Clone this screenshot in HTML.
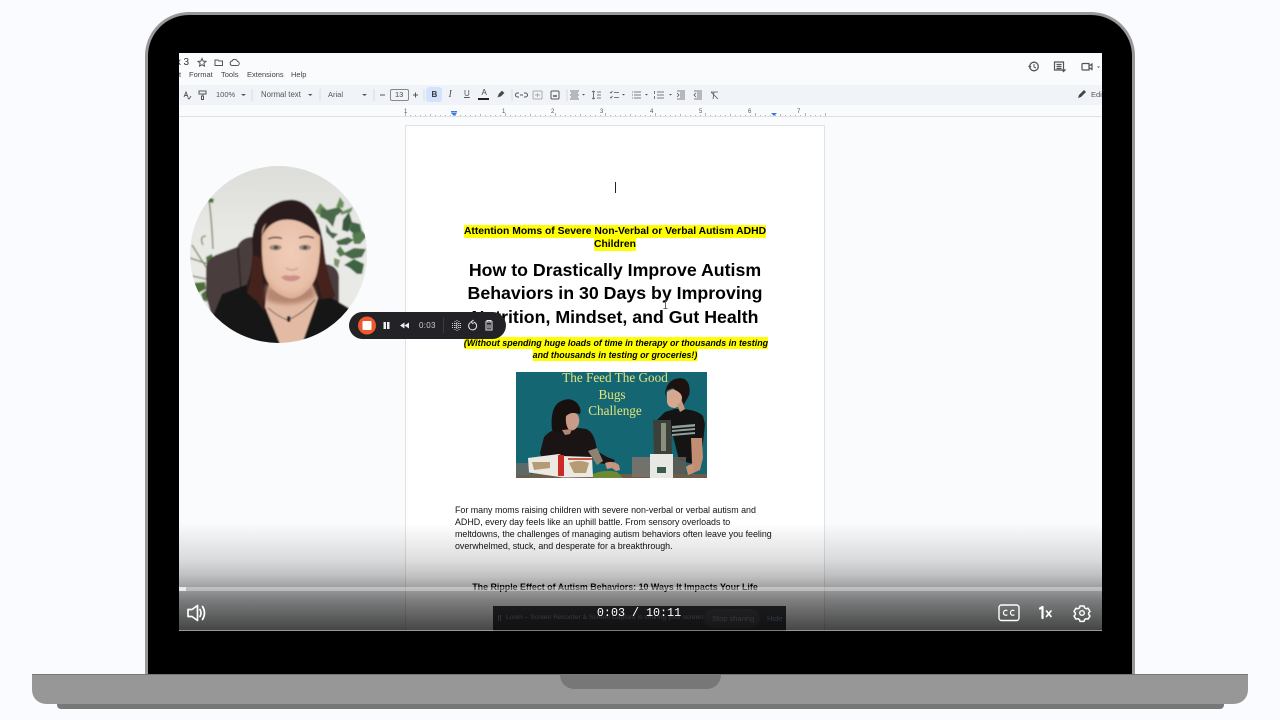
<!DOCTYPE html>
<html lang="en"><head><meta charset="utf-8"><title>Video</title>
<style>
html,body{margin:0;padding:0;width:1280px;height:720px;overflow:hidden;background:#f9fbff;font-family:"Liberation Sans",sans-serif}
.a{position:absolute}
.t{position:absolute;white-space:nowrap;line-height:1}
.c{transform:translateX(-50%)}
#bezel{left:145px;top:12px;width:984px;height:680px;border:3px solid #999;border-bottom:0;border-radius:44px 44px 0 0;background:#000}
#screen{left:179px;top:53px;width:923px;height:578px;background:#f9fbfd;overflow:hidden}
#screen .in{position:absolute;left:-179px;top:-53px;width:1280px;height:720px;filter:blur(.3px)}
.m{font-size:7.5px;color:#444}
.y{background:#ff0;color:#000;font-weight:bold;line-height:13px}
</style></head><body>

<div class="a" id="bezel"></div>
<div class="a" style="left:32px;top:674px;width:1216px;height:30px;background:#979797;border-radius:0 0 14px 14px;border-top:1px solid #777;box-sizing:border-box"></div>
<div class="a" style="left:57px;top:704px;width:1167px;height:5px;background:#777;border-radius:0 0 4px 4px"></div>
<div class="a" style="left:560px;top:674px;width:161px;height:15px;background:#777;border-radius:0 0 14px 14px"></div>

<div class="a" id="screen"><div class="in">
  <!-- toolbar + ruler -->
  <div class="a" style="left:179px;top:85px;width:923px;height:20px;background:#f0f4f8"></div>
  <div class="a" style="left:179px;top:116px;width:923px;height:1px;background:#dfe1e4"></div>
  <div class="t" style="left:183.500px;top:58px;font-size:10px;color:#333">3</div>
  <div class="t" style="left:176px;top:58px;font-size:10px;color:#333">x</div>
  <div class="t m" style="left:179px;top:70.500px;color:#444;width:2px;overflow:hidden">t</div>
  <div class="t m" style="left:189px;top:70.500px">Format</div>
  <div class="t m" style="left:221px;top:70.500px">Tools</div>
  <div class="t m" style="left:247px;top:70.500px">Extensions</div>
  <div class="t m" style="left:291px;top:70.500px">Help</div>
  <div class="t m" style="left:216px;top:91px;color:#555">100%</div>
  <div class="t" style="left:261px;top:90.500px;font-size:7.800px;color:#555">Normal text</div>
  <div class="t m" style="left:328px;top:90.500px;color:#555">Arial</div>
  <div class="a" style="left:390px;top:89px;width:17px;height:10px;border:1px solid #888;border-radius:2px"></div>
  <div class="t m" style="left:395px;top:91px;color:#444">13</div>
  <div class="a" style="left:426px;top:87px;width:16px;height:15px;background:#d5e3fa;border-radius:3px"></div>
  <div class="t" style="left:431.500px;top:91px;font-size:8px;font-weight:bold;color:#334">B</div>
  <div class="t" style="left:448.500px;top:90px;font-size:10px;font-style:italic;font-family:'Liberation Serif',serif;color:#555">I</div>
  <div class="t" style="left:464px;top:90px;font-size:8px;color:#555;text-decoration:underline">U</div>
  <div class="t" style="left:481.500px;top:89px;font-size:8px;color:#444">A</div>
  <div class="t m" style="left:1091px;top:91px;color:#555;width:11px;overflow:hidden">Edit</div>

  <svg class="a" style="left:0;top:0" width="1280" height="720" viewBox="0 0 1280 720" fill="none" stroke="#555" stroke-width="1">
    <!-- title icons -->
    <path d="M202 58.500l1.200 2.600 2.800.3-2.100 1.900.6 2.800-2.500-1.400-2.500 1.400.6-2.800-2.100-1.900 2.800-.3z"/>
    <path d="M215 60h3l1 1h3.500v4.500H215z"/>
    <path d="M232 65.500h5a2 2 0 0 0 .5-4 3 3 0 0 0-5.500-.5 2.300 2.300 0 0 0 0 4.500z"/>
    <!-- right icons -->
    <circle cx="1034" cy="66.500" r="4.300" stroke-width="1.300"/><path d="M1034 64v3l2 1M1028.500 66l1.500 1.500 1-1.500" stroke-width="1"/>
    <path d="M1054.500 62h9v8h1.500l-1.500 1.500-1-1.500h-8z M1056.500 64.500h5M1056.500 66.500h5M1056.500 68.500h5" stroke-width="1.200"/>
    <path d="M1083 63.500h6v6.500h-6a1 1 0 0 1-1-1v-4.500a1 1 0 0 1 1-1zM1089 66l3-2v5.500l-3-2" stroke-width="1.200"/>
    <path d="M1097 66.500h3l-1.500 1.500z" fill="#555" stroke="none"/>
    <!-- toolbar icons -->
    <path d="M184 97l2-5 2 5M185 95.500h2M187.500 97.500l1.500 1.500 2-3" stroke-width=".9"/>
    <path d="M199 91h7v3h-7zM203 94v2h-1.500v3.500h2V96" stroke-width="1"/>
    <path d="M241 94h5l-2.500 2z M308 94h4.500l-2.250 2z M362 94h5l-2.500 2z" fill="#555" stroke="none"/>
    <path d="M252 89v12M320 89v12M374 89v12M424 89v12M512 89v12M567 89v12" stroke="#d7dbe0"/>
    <path d="M380 95h5M413 95h5M415.500 92.500v5" stroke-width="1"/>
    <rect x="478" y="98" width="11" height="2" fill="#222" stroke="none"/>
    <path d="M498 97l1-3 3-3 2 2-3 3z" fill="#444" stroke-width=".6"/>
    <path d="M519 93h-1.500a2 2 0 0 0 0 4H519M524 93h1.500a2 2 0 0 1 0 4H524M520 95h3"/>
    <rect x="533" y="91" width="9" height="8" rx="1" stroke="#aaa"/><path d="M535 95h5M537.500 93v4" stroke="#aaa"/>
    <rect x="551" y="91" width="8" height="8" rx="1"/><path d="M553 96h4" stroke-width="1.500"/>
    <path d="M570 91h9M571 93h7M570 95h9M571 97h7M570 99h9" stroke-width=".8"/>
    <path d="M582 94h3l-1.500 1.500zM622 94h3l-1.500 1.500zM645 94h3l-1.500 1.500zM669 94h3l-1.500 1.500z" fill="#555" stroke="none"/>
    <path d="M592 92l1.500-1 1.500 1M592 98l1.500 1 1.500-1M593.500 92v6M597 92h4M597 95h4M597 98h4" stroke-width=".8"/>
    <path d="M610 92l1 1 1.500-2M610 97l1 1 1.500-2M614 92.500h5M614 97.500h5" stroke-width=".8"/>
    <path d="M634 92h7M634 95h7M634 98h7M632 92h1M632 95h1M632 98h1" stroke-width=".8"/>
    <path d="M657 92h7M657 95h7M657 98h7M654.500 91v3M654.500 96v3" stroke-width=".8"/>
    <path d="M677 91h8M680 93h5M680 95h5M680 97h5M677 99h8M677 93l2 2-2 2" stroke-width=".8"/>
    <path d="M694 91h8M697 93h5M697 95h5M697 97h5M694 99h8M696 93l-2 2 2 2" stroke-width=".8"/>
    <path d="M711 92h7M714 92l-1 7M711 92l7 7" stroke-width=".8"/>
    <path d="M1078 98l1-3 5-5 2 2-5 5z" fill="#444" stroke="none"/>

    <!-- ruler -->
    <path d="M405.500 113v3M410.500 115v1M415.500 115v1M420.500 115v1M425.500 115v1M430.500 114v2M435.500 115v1M440.500 115v1M445.500 115v1M450.500 115v1M455.500 113v3M460.500 115v1M465.500 115v1M470.500 115v1M475.500 115v1M480.500 114v2M485.500 115v1M490.500 115v1M495.500 115v1M500.500 115v1M505.500 113v3M510.500 115v1M515.500 115v1M520.500 115v1M525.500 115v1M530.500 114v2M535.500 115v1M540.500 115v1M545.500 115v1M550.500 115v1M555.500 113v3M560.500 115v1M565.500 115v1M570.500 115v1M575.500 115v1M580.500 114v2M585.500 115v1M590.500 115v1M595.500 115v1M600.500 115v1M605.500 113v3M610.500 115v1M615.500 115v1M620.500 115v1M625.500 115v1M630.500 114v2M635.500 115v1M640.500 115v1M645.500 115v1M650.500 115v1M655.500 113v3M660.500 115v1M665.500 115v1M670.500 115v1M675.500 115v1M680.500 114v2M685.500 115v1M690.500 115v1M695.500 115v1M700.500 115v1M705.500 113v3M710.500 115v1M715.500 115v1M720.500 115v1M725.500 115v1M730.500 114v2M735.500 115v1M740.500 115v1M745.500 115v1M750.500 115v1M755.500 113v3M760.500 115v1M765.500 115v1M770.500 115v1M775.500 115v1M780.500 114v2M785.500 115v1M790.500 115v1M795.500 115v1M800.500 115v1M805.500 113v3M810.500 115v1M815.500 115v1M820.500 115v1M825.500 113v3" stroke="#999" stroke-width=".7"/>
    <path d="M451 111h6v1.500h-6zM451 113h6l-3 3z" fill="#3b78e7" stroke="none"/>
    <path d="M771 113h6l-3 3z" fill="#3b78e7" stroke="none"/>
    <g font-family="Liberation Sans" font-size="6" fill="#555" stroke="none">
      <text x="404" y="113">1</text><text x="502" y="113">1</text><text x="551" y="113">2</text><text x="600" y="113">3</text><text x="650" y="113">4</text><text x="699" y="113">5</text><text x="748" y="113">6</text><text x="797" y="113">7</text>
    </g>
  </svg>

  <!-- document page -->
  <div class="a" style="left:405px;top:125px;width:420px;height:520px;background:#fff;border:1px solid #e0e2e5;box-sizing:border-box"></div>
  <div class="a" style="left:615px;top:182px;width:1px;height:11px;background:#222"></div>

  <div class="t c" style="left:615px;top:224.500px;font-size:10.350px"><span class="y" style="display:block">Attention Moms of Severe Non-Verbal or Verbal Autism ADHD</span></div>
  <div class="t c" style="left:615px;top:237.500px;font-size:10.350px"><span class="y" style="display:block">Children</span></div>
  <div class="t c" style="left:615px;top:261.500px;font-size:17.750px;font-weight:bold;color:#000">How to Drastically Improve Autism</div>
  <div class="t c" style="left:615px;top:285px;font-size:17.750px;font-weight:bold;color:#000">Behaviors in 30 Days by Improving</div>
  <div class="t c" style="left:615px;top:308.500px;font-size:17.750px;font-weight:bold;color:#000">Nutrition, Mindset, and Gut Health</div>
  <div class="t c" style="left:616px;top:337px;font-size:8.900px;font-style:italic"><span class="y" style="display:block;line-height:12px">(Without spending huge loads of time in therapy or thousands in testing</span></div>
  <div class="t c" style="left:615px;top:349px;font-size:8.900px;font-style:italic"><span class="y" style="display:block;line-height:12px">and thousands in testing or groceries!)</span></div>
  <svg class="a" style="left:662px;top:300px" width="7" height="10" viewBox="0 0 7 10" fill="none" stroke="#444" stroke-width=".8"><path d="M1.500 .5h4M3.500 .5v8M1.500 8.500h4"/></svg>

  <!-- challenge image -->
  <svg class="a" style="left:516px;top:372px;filter:blur(.35px)" width="191" height="106" viewBox="516 372 191 106">
    <rect x="516" y="372" width="191" height="106" fill="#146672"/>
    <rect x="516" y="474" width="191" height="4" fill="#6b5d4a"/>
    <path d="M516 463h15l-1 12h-14z" fill="#5b6a68"/>
    <g font-family="Liberation Serif" font-size="13.200" fill="#e4e47c" text-anchor="middle">
      <text x="615" y="382">The Feed The Good</text><text x="612" y="399">Bugs</text><text x="615" y="415">Challenge</text>
    </g>
    <!-- woman -->
    <path d="M540 453l4-16q5-6 15-9l12-1 15 2q9 3 11 22l10 6 8 3-3 5-14-2-8-6-2 20h-20l-26-18z" fill="#1a1414"/>
    <path d="M552 430q-2-20 6-27 10-7 18-1 6 6 4 12l-5-1-8 18-9 2z" fill="#16100f"/>
    <path d="M566 416q6-5 11-2 4 5 1 12-4 6-9 4-4-5-3-14z" fill="#c89c86"/>
    <path d="M562 430l10-1-2 5-5 1z" fill="#b58572"/>
    <path d="M605 463q8-3 14 2l1 5-4 1-4-3-5 1z" fill="#c79480"/>
    <path d="M588 451l9-3 6 13-6 4z" fill="#8f8273"/>
    <!-- book -->
    <path d="M528 458l31-4 4 2 29 1 1 20-30 .5-34-5z" fill="#ece9e2"/>
    <rect x="558" y="455" width="6" height="21" fill="#cc2a26"/>
    <path d="M532 462h18v6l-16 2zM569 463q10-4 20 0l-3 10h-12z" fill="#a9885a" opacity=".8"/>
    <path d="M568 458h24v2h-24z" fill="#c95b4a"/>
    <path d="M593 474q12-5 24-2l6 6h-30z" fill="#6f8a35"/>
    <!-- teen -->
    <path d="M657 420l8-8 10-3h8q14 1 20 7l2 8-4 38-8 2-14-4-6-24-16-6z" fill="#141414"/>
    <path d="M672 426l23-2v2.500l-23 2zM672 430l23-2v2l-23 2zM672 434l23-2v2l-23 2z" fill="#8f9f9c"/>
    <path d="M665 396q0-13 10-17 11-3 14 6 2 9-2 14l-4 7-2-10-8-8-6 2z" fill="#1e1210"/>
    <path d="M667 392q6-4 8-2 7 3 7 8-1 8-7 10-7 0-8-6 0-6 0-10z" fill="#d6a890"/>
    <path d="M677 405l5-4 3 8-5 3z" fill="#c59880"/>
    <path d="M691 438h11l1 20-3 12-9 4-3-3 4-8z" fill="#c18d73"/>
    <path d="M686 467q4-4 8-2l-1 8-5 2z" fill="#c89478"/>
    <!-- juicer -->
    <path d="M653 420h18l1 34h-18z" fill="#3d4038"/>
    <path d="M661 423h5v28h-5z" fill="#8a8f7c"/>
    <path d="M650 454h23v24h-23z" fill="#e7e7e4"/>
    <rect x="657" y="467" width="9" height="6" fill="#3c5a4a"/>
    <path d="M632 457h18v20h-18z" fill="#7b726d" opacity=".9"/>
    <path d="M673 457h13v17h-13z" fill="#5e5a55" opacity=".9"/>
  </svg>

  <div class="t" style="left:455px;top:505.500px;font-size:8.900px;color:#111">For many moms raising children with severe non-verbal or verbal autism and</div>
  <div class="t" style="left:455px;top:517.500px;font-size:8.900px;color:#111">ADHD, every day feels like an uphill battle. From sensory overloads to</div>
  <div class="t" style="left:455px;top:529.500px;font-size:8.900px;color:#111">meltdowns, the challenges of managing autism behaviors often leave you feeling</div>
  <div class="t" style="left:455px;top:541.500px;font-size:8.900px;color:#111">overwhelmed, stuck, and desperate for a breakthrough.</div>
  <div class="t c" style="left:615px;top:582.500px;font-size:8.900px;font-weight:bold;color:#000">The Ripple Effect of Autism Behaviors: 10 Ways It Impacts Your Life</div>

  <!-- Loom sharing bar -->
  <div class="a" style="left:493px;top:606px;width:293px;height:30px;background:#3a3b3f"></div>
  <div class="t" style="left:506px;top:615px;font-size:6.700px;color:#9a9a9a">Loom – Screen Recorder &amp; Screen Capture is sharing your screen.</div>
  <div class="a" style="left:704px;top:609px;width:56px;height:19px;border-radius:10px;background:#4a4b4f"></div>
  <div class="t" style="left:712px;top:615px;font-size:7.500px;color:#9a9a9a">Stop sharing</div>
  <div class="t" style="left:767px;top:615px;font-size:7.500px;color:#7a9ad0">Hide</div>
  <div class="a" style="left:498px;top:615px;width:1px;height:6px;background:#888;box-shadow:2px 0 0 #888"></div>
 </div>

  <!-- dark gradient -->
  <div class="a" style="left:0;top:470px;width:923px;height:108px;background:linear-gradient(to bottom,rgba(0,0,0,0) 0%,rgba(0,0,0,.13) 34%,rgba(0,0,0,.23) 48%,rgba(0,0,0,.5) 71%,rgba(0,0,0,.73) 100%)"></div>
  <div class="a" style="left:0;top:534px;width:923px;height:4px;background:rgba(255,255,255,.35)"></div>
  <div class="a" style="left:0;top:534px;width:7px;height:4px;background:rgba(255,255,255,.7)"></div>
  <div class="a" style="left:0;top:577px;width:923px;height:1px;background:rgba(255,255,255,.45)"></div>
</div>

<!-- webcam bubble -->
<svg class="a" style="left:190px;top:166px" width="177" height="177" viewBox="190 166 177 177">
  <defs><clipPath id="ci"><circle cx="278.500" cy="254.500" r="88.500"/></clipPath>
  <linearGradient id="bg" x1="0" y1="0" x2="0" y2="1"><stop offset="0" stop-color="#dcdcd8"/><stop offset=".4" stop-color="#e8e8e5"/><stop offset="1" stop-color="#e9e9e6"/></linearGradient>
  <radialGradient id="fc" cx=".5" cy=".45" r=".6"><stop offset="0" stop-color="#f0cdb8"/><stop offset=".75" stop-color="#e8bfa8"/><stop offset="1" stop-color="#d5a48c"/></radialGradient>
  <filter id="sf" x="-5%" y="-5%" width="110%" height="110%"><feGaussianBlur stdDeviation=".7"/></filter>
  <filter id="sf2" x="-20%" y="-20%" width="140%" height="140%"><feGaussianBlur stdDeviation="2"/></filter></defs>
  <g clip-path="url(#ci)">
    <g filter="url(#sf)">
    <rect x="185" y="160" width="190" height="190" fill="url(#bg)"/>
    <!-- left plant -->
    <path d="M209 199q3 25 4 50M192 245l14 22M190 258l18 6M203 245q-4-9 3-9M192 276l14 3" stroke="#74835a" stroke-width="1.300" fill="none"/>
    <path d="M208 202l2-4 4 1-1 4zM206 257l6-3 1 7-6 5zM193 283l12-1 1 7-8 4zM201 294l5-4 1 12-4-2z" fill="#4e7038"/>
    <!-- right plant -->
    <g fill="#48694a">
      <path d="M254 224l8-2-2 5-5 5z" fill="#5d8050"/>
      <path d="M315 212l5-9 7 7-3 8z" fill="#6a8f58"/>
      <path d="M321 208l6 2 12-3 4 4-7 5-3 11-6-7-7-3z"/>
      <path d="M336 207l4-10 4 6-1 5z" fill="#6a8f58"/>
      <path d="M341 212l12-5-2 5-10 3z" fill="#6a8f58"/>
      <path d="M326 224l5 8 7 2-5 5-7-7z"/>
      <path d="M349 212l3 10-4 10-6-2 1-10z" fill="#37593d"/>
      <path d="M336 241l12-4 6 3-7 5-9 0z"/>
      <path d="M352 222l8 2 2 8-8 2-5-4z" fill="#3f6544"/>
      <path d="M352 234l10-3 5 5-7 8-6 0z" fill="#557d4e"/>
      <path d="M342 254l12-6 12 1-4 8-10 2z"/>
      <path d="M344 265l10-6 10 5-2 10-5 0-7-6z" fill="#3c6440"/>
      <path d="M334 258l6 2-2 8-4-3z" fill="#7b9468"/>
      <path d="M340 246l6 8-6 3-4-6z" fill="#557d4e"/>
    </g>
    <!-- chair -->
    <path d="M206 268q1-9 10-13l21-8q4-9 14-10h58q4 4 8 25l13 3q8 3 9 12v34l-60 30h-60l-13-45z" fill="#4a3e3c"/>
    <path d="M238 248l3 42" stroke="#312927" stroke-width="2" fill="none"/>
    <!-- body -->
    <path d="M213 316l9-22 26-10 20 8h50l14 6 20 12-10 43H225z" fill="#151312"/>
    <!-- hair back -->
    <path d="M252 240q2-30 30-39 22-6 34 16 6 14 8 32 2 24 11 46l-2 2-18 4-30-2-14 1 2 14-5-6q-4-8-10-8l-10-8q-3-6 1-14 5-18 3-38z" fill="#2c1a1a"/>
    <path d="M253 255l-3 28-3 10 10 8 7 10-1-25-1-28zM321 240l5 25 9 32-13 2-6-22z" fill="#44201f"/>
    <!-- neck and chest -->
    <path d="M265 307l15 37h22l16-46-8-18h-40l-4 16z" fill="#e3bba4"/>
    <path d="M266 284q22 16 46 0l4 12q-24 14-50 4z" fill="#b58670" filter="url(#sf2)"/>
    <!-- face -->
    <path d="M262 232q1-10 14-14 14-5 28-1 15 4 16 20 1 18-3 36-3 13-14 21-9 7-18 3-16-6-21-24-3-18-2-41z" fill="url(#fc)"/>
    <path d="M262 236q6-13 20-16 20-3 38 16-1-12-6-18-14-12-30-8-18 4-22 26z" fill="#2c1a1a"/>
    <path d="M268 239q7-3 14-.5M299 238q7-3 15 0" stroke="#533c33" stroke-width="1.400" fill="none"/>
    <ellipse cx="275.500" cy="247.500" rx="6" ry="2.800" fill="#97897f"/><ellipse cx="305" cy="247.500" rx="6" ry="2.800" fill="#97897f"/>
    <circle cx="276" cy="247.500" r="2" fill="#4f4a44"/><circle cx="305" cy="247.500" r="2" fill="#4f4a44"/>
    <path d="M286 268q6 4 12 0" stroke="#cfa189" stroke-width="1.500" fill="none"/>
    <path d="M281 277q5-3 9-1 4-2 11 1-3 4-10 4.500-7-.5-10-4.500z" fill="#cc8f89"/>
    <path d="M268 308q12 10 20 12 14-6 27-20" stroke="#2a1d18" stroke-width=".8" fill="none"/>
    <rect x="287" y="316" width="3.500" height="6" rx="1.500" fill="#23283a"/>
    </g>
  </g>
</svg>

<!-- recorder pill -->
<div class="a" style="left:349px;top:312px;width:157px;height:27px;background:#232327;border-radius:13.500px"></div>
<svg class="a" style="left:349px;top:312px" width="157" height="27" viewBox="349 312 157 27" fill="none" stroke="#e6e6e6">
  <circle cx="367" cy="325.500" r="9" fill="#f0582d" stroke="none"/>
  <rect x="362.500" y="321" width="9" height="9" rx="1" fill="#fff" stroke="none"/>
  <path d="M383.500 322h2.500v7h-2.500zM387 322h2.500v7H387z" fill="#eee" stroke="none"/>
  <path d="M404.500 322.500v6l-4.500-3zM409 322.500v6l-4.500-3z" fill="#eee" stroke="none"/>
  <path d="M443.500 318v15" stroke="#3b3b40"/>
  <g stroke="#ccc" stroke-width="1" stroke-dasharray="1 1"><path d="M452 323.500h10M452 325.500h10M452 327.500h10M457 320v11M455 321v9M459 321v9"/></g>
  <path d="M470.500 322.500a4 4 0 1 0 3-.5M473.500 320l-2.500 2 2.500 2" stroke-width="1"/>
  <path d="M485 322h8M487 322v-1.500h4v1.500M486 323v7h6v-7M488 324.500v4M490 324.500v4" stroke-width="1"/>
</svg>
<div class="t" style="left:419px;top:321.500px;font-size:8px;letter-spacing:.3px;color:#ccc">0:03</div>

<!-- video controls -->
<div class="t c" style="left:639px;top:608px;font-size:11.700px;font-family:'Liberation Mono',monospace;color:#fff">0:03 / 10:11</div>
<svg class="a" style="left:0;top:0" width="1280" height="720" viewBox="0 0 1280 720" fill="none" stroke="#fff" stroke-width="1.700" stroke-linejoin="round" stroke-linecap="round">
  <path d="M188 609.500h4l5.500-4v15l-5.500-4h-4z"/>
  <path d="M200 609.500q2 3.500 0 7M202.500 606.500q4 6.500 0 13" />
  <rect x="999" y="605" width="20" height="15.500" rx="2.500" stroke-width="1.400"/>
  <g stroke-width="1.200"><path d="M1007 610.500a2.500 2.500 0 1 0 0 4.500M1014 610.500a2.500 2.500 0 1 0 0 4.500"/></g>
  <path d="M1040 608.500l2.500-1.500v11" stroke-width="2.200"/>
  <path d="M1046.500 611l4.500 5.500M1051 611l-4.500 5.500" stroke-width="1.700"/>
  <g transform="translate(1082 613) scale(.8) translate(-1082 -613.700)">
  <path d="M1079.500 605h5l.7 2.300 2 1.100 2.400-.6 2.400 4-1.700 1.800v2l1.700 1.800-2.400 4-2.400-.6-2 1.100-.7 2.300h-5l-.7-2.300-2-1.100-2.400.6-2.400-4 1.700-1.800v-2l-1.700-1.800 2.400-4 2.400.6 2-1.100z" stroke-width="1.900"/>
  </g>
  <circle cx="1082" cy="613" r="2.300" stroke-width="1.400"/>
</svg>
</body></html>
